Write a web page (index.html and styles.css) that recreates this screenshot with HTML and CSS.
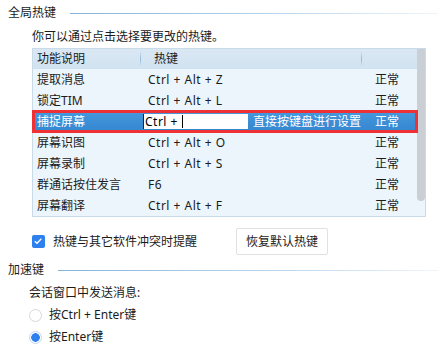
FILE: index.html
```html
<html>
<head><title>热键设置</title>
<meta charset="utf-8">
<link rel="stylesheet" href="styles.css">
</head>
<body>
<div class="group-title first"><span>全局热键</span><div class="rule"></div></div>
<div class="hint">你可以通过点击选择要更改的热键。</div>
<div class="table">
	<div class="grid">
		<div class="row head">
			<div class="c1">功能说明</div>
			<div class="c2"><span class="sep"></span>热键</div>
			<div class="c3"><span class="sep"></span></div>
		</div>
		<div class="row"><div class="c1">提取消息</div><div class="c2 keys">Ctrl + Alt + Z</div><div class="c3">正常</div></div>
		<div class="row"><div class="c1">锁定TIM</div><div class="c2 keys">Ctrl + Alt + L</div><div class="c3">正常</div></div>
		<div class="row sel">
			<div class="c1">捕捉屏幕</div>
			<div class="c2"><div class="keybox">Ctrl +<span class="caret"></span></div><span class="tip">直接按键盘进行设置</span></div>
			<div class="c3">正常</div>
		</div>
		<div class="row"><div class="c1">屏幕识图</div><div class="c2 keys">Ctrl + Alt + O</div><div class="c3">正常</div></div>
		<div class="row"><div class="c1">屏幕录制</div><div class="c2 keys">Ctrl + Alt + S</div><div class="c3">正常</div></div>
		<div class="row"><div class="c1">群通话按住发言</div><div class="c2 keys">F6</div><div class="c3">正常</div></div>
		<div class="row"><div class="c1">屏幕翻译</div><div class="c2 keys">Ctrl + Alt + F</div><div class="c3">正常</div></div>
	</div>
	<div class="scroll"><div class="thumb"></div></div>
</div>
<div class="options">
	<div class="check"><span class="box"><svg width="12" height="12" viewBox="0 0 12 12"><path d="M2.8 6.2 L5 8.3 L9.3 3.8" fill="none" stroke="#fff" stroke-width="1.3"/></svg></span>热键与其它软件冲突时提醒</div>
	<div class="btn">恢复默认热键</div>
</div>
<div class="group-title second"><span>加速键</span><div class="rule"></div></div>
<div class="label">会话窗口中发送消息:</div>
<div class="radios">
	<div class="radio"><span class="dot"></span>按Ctrl + Enter键</div>
	<div class="radio on"><span class="dot"></span>按Enter键</div>
</div>
</body>
</html>
```
FILE: styles.css
```css
body {
	margin: 0;
	background: #fff;
	color: #1b1b1b;
	font-family: "Noto Sans", "Noto Sans CJK SC", "Microsoft YaHei", sans-serif;
	font-size: 12px;
	line-height: 16px;
	overflow: hidden;
}
.group-title
{
	display: flex;
	align-items: center;
	padding-left: 8px;
}
.group-title.first { margin-top: 5px; }
.group-title.first .rule { margin-left: 14px; }
.group-title.second { margin-top: 7px; }
.group-title.second .rule { margin-left: 14px; }
.rule
{
	flex: 1;
	height: 1px;
	background: linear-gradient(to right, #86b3da, #bcd7ee 60%, #f0f5fa);
}
.hint
{
	margin: 8px 0 0 32px;
}
.table
{
	display: flex;
	margin: 3px 0 0 32px;
	width: 392px;
	border: 1px solid #c9dbe8;
	background: #ebf5fb;
}
.grid { flex: 1; }
.row
{
	display: grid;
	grid-template-columns: 107px 221px 1fr;
	height: 21px;
	align-items: center;
}
.row.head
{
	height: 20px;
	background: linear-gradient(#dae8f4, #d0e2f0);
}
.c1 { padding-left: 4px; }
.c2 { padding-left: 8px; display: flex; align-items: center; white-space: nowrap; }
.keys { letter-spacing: 0.5px; }
.c3 { padding-left: 14px; display: flex; align-items: center; }
.head .c2 { padding-left: 0; }
.head .c3 { padding-left: 0; height: 20px; }
.sep
{
	width: 1px;
	height: 14px;
	margin-right: 13px;
	background: linear-gradient(#d0e2f0, #8fb9dc, #d0e2f0);
}
.row.sel
{
	background: linear-gradient(#4699dc, #3386d0);
	color: #fff;
	box-shadow: inset 0 0 0 2px #ee3134, 0 0 0 1px #ee3134;
	position: relative;
}
.sel .c2 { padding-left: 3px; }
.keybox
{
	width: 105px;
	height: 15px;
	background: #fff;
	color: #000;
	line-height: 15px;
	display: flex;
	align-items: center;
	border-left: 1px solid #222;
	padding-left: 1px;
	letter-spacing: 0.5px;
}
.caret
{
	width: 1px;
	height: 13px;
	background: #000;
	margin-left: 4px;
}
.tip { margin-left: 5px; white-space: nowrap; }
.sel .c3 { padding-left: 14px; }
.scroll
{
	width: 8px;
	background: #ebf5fb;
}
.thumb
{
	height: 152px;
	background: #c9cfd4;
	border-radius: 0 0 4px 4px;
}
.options
{
	display: flex;
	align-items: center;
	margin: 11px 0 0 32px;
}
.check
{
	display: flex;
	align-items: center;
	width: 204px;
}
.box
{
	width: 13px;
	height: 13px;
	border-radius: 2px;
	background: #2f80ef;
	margin-right: 8px;
	display: flex;
}
.btn
{
	width: 90px;
	height: 25px;
	line-height: 25px;
	border: 1px solid #e1e1e1;
	border-radius: 2px;
	text-align: center;
	color: #222;
}
.label
{
	margin: 7px 0 0 29px;
}
.radios { margin-top: 3px; }
.radio
{
	display: flex;
	align-items: center;
	height: 22px;
	margin-left: 29px;
}
.dot
{
	width: 11px;
	height: 11px;
	border: 1px solid #d8d8d8;
	border-radius: 50%;
	margin-right: 7px;
	box-sizing: content-box;
}
.radio.on .dot
{
	border-color: #c3d5ee;
	background: radial-gradient(circle, #2f80ef 0 4px, #fff 4.6px);
}
```
